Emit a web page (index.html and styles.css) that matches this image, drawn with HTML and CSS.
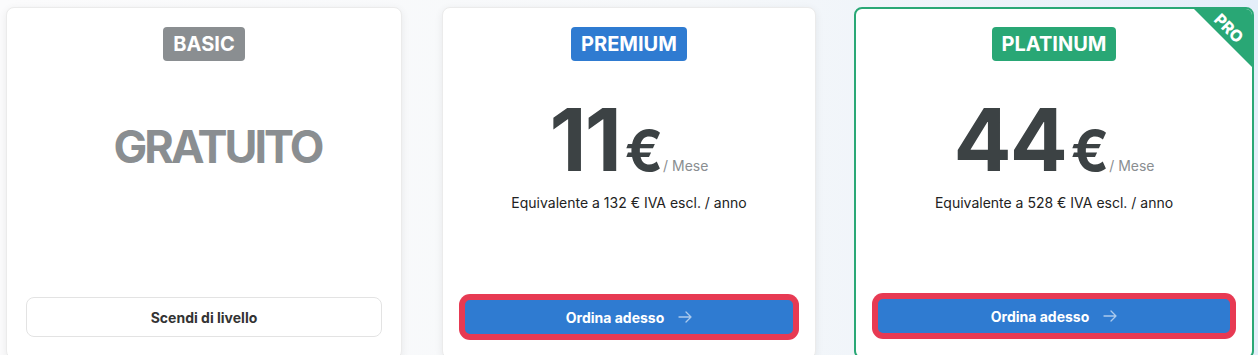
FILE: index.html
```html
<!DOCTYPE html>
<html lang="it">
<head>
  <meta charset="UTF-8" />
  <meta name="viewport" content="width=device-width, initial-scale=1.0" />
  <title>Piani</title>
  <link rel="stylesheet" href="styles.css">
</head>
<body>
  <div class="plans">
    <div class="plan">
      <span class="badge basic">BASIC</span>
      <div class="free">GRATUITO</div>
      <button class="btn btn-light">Scendi di livello</button>
    </div>

    <div class="plan">
      <span class="badge premium">PREMIUM</span>
      <div class="price">
        <span class="amount ones">11</span><span class="euro">€</span><span class="period">/ Mese</span>
      </div>
      <p class="yearly">Equivalente a 132 € IVA escl. / anno</p>
      <button class="btn btn-primary">
        Ordina adesso
        <svg class="arrow" width="14" height="12" viewBox="0 0 14 12" fill="none" stroke="currentColor" stroke-width="1.3" stroke-linecap="round" stroke-linejoin="round"><path d="M1 6h12M8 1l5 5-5 5"/></svg>
      </button>
    </div>

    <div class="plan plan-pro">
      <div class="ribbon"><span>PRO</span></div>
      <span class="badge platinum">PLATINUM</span>
      <div class="price">
        <span class="amount">44</span><span class="euro">€</span><span class="period">/ Mese</span>
      </div>
      <p class="yearly">Equivalente a 528 € IVA escl. / anno</p>
      <button class="btn btn-primary">
        Ordina adesso
        <svg class="arrow" width="14" height="12" viewBox="0 0 14 12" fill="none" stroke="currentColor" stroke-width="1.3" stroke-linecap="round" stroke-linejoin="round"><path d="M1 6h12M8 1l5 5-5 5"/></svg>
      </button>
    </div>
  </div>
</body>
</html>
```

FILE: styles.css
```css
* {
  box-sizing: border-box;
  font-family: 'Inter', 'Liberation Sans', sans-serif;
}

body {
  margin: 0;
  height: 355px;
  overflow: hidden;
  background: linear-gradient(90deg, #fbfbfc 0%, #f6f8fa 55%, #e4eef9 100%);
  color: #222;
}

.plans {
  display: grid;
  grid-template-columns: 396px 374px 398px;
  column-gap: 40px;
  padding: 7px 6px 0;
}

.plans .plan:nth-child(3) {
  margin-left: -2px;
}

.plan {
  position: relative;
  display: flex;
  flex-direction: column;
  align-items: center;
  height: 352px;
  padding: 19px;
  background: #fff;
  border: 1px solid #ebebeb;
  border-radius: 8px;
  box-shadow: 0 2px 8px rgba(0, 0, 0, 0.07);
  overflow: hidden;
}

.plan-pro {
  border: 2px solid #2aa876;
  box-shadow: none;
}

.badge {
  display: inline-block;
  padding: 4px 10px;
  border-radius: 4px;
  color: #fff;
  font-size: 20px;
  font-weight: 700;
  line-height: 26px;
}

.plan-pro .badge {
  margin-top: -1px;
}

.basic { background: #8a8e91; }
.premium { background: #2f7bd1; }
.platinum { background: #29a775; }

.free {
  margin-top: 63px;
  margin-left: 27px;
  font-size: 45px;
  font-weight: 700;
  line-height: 1;
  color: #8a8e91;
  letter-spacing: -3px;
}

.price {
  display: flex;
  align-items: baseline;
  margin-top: 36px;
  line-height: 1;
  color: #3c4244;
}

.amount {
  font-size: 86px;
  font-weight: 700;
  letter-spacing: -2px;
}

.euro {
  font-size: 56px;
  font-weight: 700;
  margin-left: 5px;
}

.period {
  font-size: 14px;
  color: #8a8e91;
}

.yearly {
  margin: 11px 0 0;
  font-size: 14px;
  color: #222;
}

.btn {
  display: flex;
  align-items: center;
  justify-content: center;
  gap: 14px;
  width: 100%;
  height: 40px;
  margin-top: auto;
  margin-bottom: 2px;
  border-radius: 8px;
  font-size: 14px;
  font-weight: 700;
  cursor: pointer;
}

.btn-light {
  background: #fff;
  border: 1px solid #e3e3e3;
  color: #333;
}

.btn-primary {
  background: #2f7bd1;
  border: 3px solid #e73a53;
  box-shadow: 0 0 0 3px #e73a53;
  color: #fff;
}

.arrow {
  color: rgba(255, 255, 255, 0.6);
}

.ribbon {
  position: absolute;
  top: 0;
  right: 0;
  width: 58px;
  height: 58px;
  background: #29a775;
  clip-path: polygon(0 0, 100% 0, 100% 100%);
}

.ribbon span {
  position: absolute;
  left: 6px;
  top: 10px;
  width: 58px;
  height: 18px;
  line-height: 18px;
  text-align: center;
  color: #fff;
  font-size: 16px;
  font-weight: 800;
  transform: rotate(45deg);
}
```
